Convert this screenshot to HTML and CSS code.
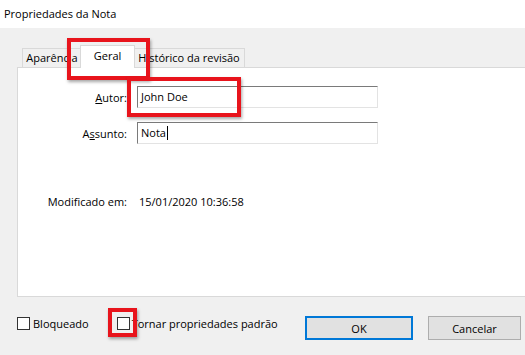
FILE: index.html
```html
<!DOCTYPE html>
<html lang="pt">
<head>
<meta charset="utf-8">
<title>Propriedades da Nota</title>
<link rel="stylesheet" href="styles.css">
</head>
<body>
<div class="titlebar">Propriedades da Nota</div>
<div class="dialog">
  <div class="tabs">
    <div class="tab tab-1">Aparência</div>
    <div class="tab tab-active">Geral</div>
    <div class="tab tab-3">Histórico da revisão</div>
  </div>
  <div class="panel">
    <div class="form">
      <span class="label"><u>A</u>utor:</span>
      <div class="input">John Doe</div>
      <span class="label">A<u>s</u>sunto:</span>
      <div class="input">Nota<span class="caret"></span></div>
    </div>
    <div class="form meta">
      <span class="label">Modificado em:</span>
      <span class="value">15/01/2020 10:36:58</span>
    </div>
  </div>
  <div class="footer">
    <label class="check"><span class="box"></span>Bloqueado</label>
    <label class="check check-2"><span class="box"></span>Tornar propriedades padrão</label>
    <div class="buttons">
      <button class="btn btn-default">OK</button>
      <button class="btn btn-cancel">Cancelar</button>
    </div>
  </div>
</div>
<div class="mark mark-tab"></div>
<div class="mark mark-author"></div>
<div class="mark mark-check"></div>
</body>
</html>
```

FILE: styles.css
```css
html, body {
  margin: 0;
  padding: 0;
}
body {
  width: 525px;
  height: 355px;
  overflow: hidden;
  background: #f0f0f0;
  font-family: "Open Sans", "Liberation Sans", Arial, sans-serif;
  font-size: 11px;
  color: #000;
  position: relative;
}
.titlebar {
  height: 28px;
  line-height: 28px;
  padding-left: 4px;
  background: #fff;
}
.dialog {
  display: flex;
  flex-direction: column;
}
.tabs {
  display: flex;
  align-items: flex-end;
  height: 22px;
  margin-top: 17px;
  padding-left: 22px;
}
.tab {
  box-sizing: border-box;
  height: 19px;
  line-height: 18px;
  border: 1px solid #d9d9d9;
  border-bottom: none;
  background: #f0f0f0;
  text-align: center;
  white-space: nowrap;
}
.tab-1 { width: 60px; }
.tab-3 { width: 112px; }
.tab-active {
  position: relative;
  z-index: 1;
  width: 55px;
  height: 23px;
  line-height: 20px;
  margin: 0 -2px -1px -2px;
  background: #fff;
}
.panel {
  box-sizing: border-box;
  height: 230px;
  margin-left: 17px;
  margin-right: -20px;
  border: 1px solid #d9d9d9;
  background: #fff;
  padding-top: 18px;
}
.form {
  display: grid;
  grid-template-columns: 109px 241px;
  column-gap: 10px;
  row-gap: 14px;
  align-items: center;
}
.label {
  text-align: right;
  white-space: nowrap;
}
.input {
  box-sizing: border-box;
  height: 22px;
  line-height: 20px;
  padding-left: 3px;
  border: 1px solid #e3e3e3;
  border-top-color: #7a7a7a;
  border-left-color: #7a7a7a;
  display: flex;
  align-items: center;
}
.caret {
  display: inline-block;
  width: 1px;
  height: 14px;
  background: #000;
  margin-left: 1px;
}
.meta {
  margin-top: 46px;
  height: 22px;
}
.value {
  padding-left: 2px;
}
.footer {
  display: flex;
  align-items: flex-start;
  margin-top: 19px;
  padding-left: 17px;
  padding-right: 4px;
}
.check {
  display: flex;
  align-items: center;
  margin-top: 1px;
  height: 13px;
  white-space: nowrap;
}
.check-2 {
  margin-left: 28px;
}
.box {
  box-sizing: border-box;
  width: 13px;
  height: 13px;
  border: 1px solid #333;
  background: #fff;
  margin-right: 3px;
}
.check-2 .box {
  margin-right: 2px;
}
.buttons {
  margin-left: auto;
  display: flex;
  gap: 15px;
}
.btn {
  box-sizing: border-box;
  height: 24px;
  margin: 0;
  padding: 0;
  background: #e1e1e1;
  border: 1px solid #adadad;
  font-family: "Open Sans", "Liberation Sans", Arial, sans-serif;
  font-size: 11px;
  color: #000;
}
.btn-default {
  width: 108px;
  border: 2px solid #0078d7;
}
.btn-cancel {
  width: 93px;
}
.mark {
  position: absolute;
  box-sizing: border-box;
  border: 4px solid #e8141c;
  box-shadow: 1px 2px 3px rgba(0, 0, 0, 0.35);
  z-index: 5;
}
.mark-tab {
  left: 67px;
  top: 38px;
  width: 83px;
  height: 42px;
}
.mark-author {
  left: 127px;
  top: 77px;
  width: 114px;
  height: 40px;
}
.mark-check {
  left: 108px;
  top: 308px;
  width: 29px;
  height: 29px;
}
```
